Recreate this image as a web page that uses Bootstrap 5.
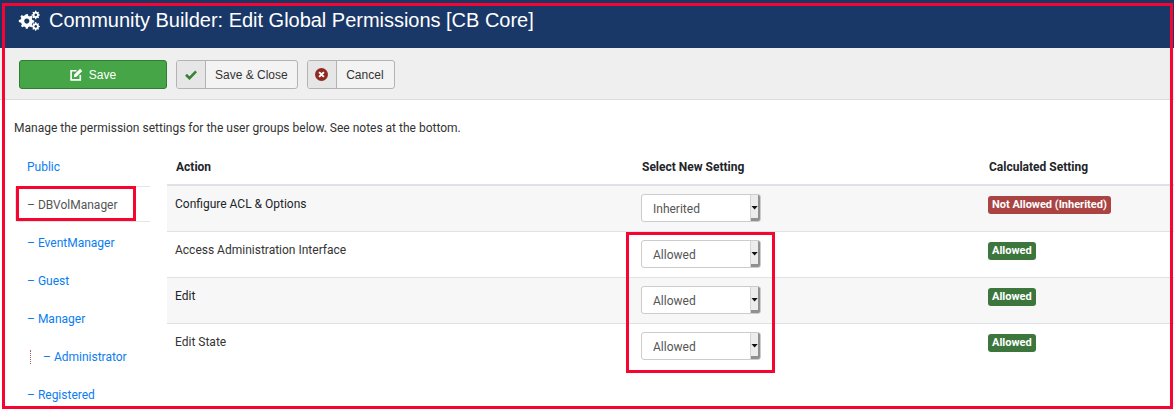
<!DOCTYPE html>
<html lang="en">
<head>
<meta charset="utf-8">
<title>Community Builder: Edit Global Permissions</title>
<link href="https://cdn.jsdelivr.net/npm/bootstrap@5.3.0/dist/css/bootstrap.min.css" rel="stylesheet">
<style>
html,body{height:418px;overflow:hidden}
body{font-family:Roboto,sans-serif;font-size:12px;line-height:18px;color:#333;background:#fff;position:relative}
.page-head{height:48px;background:#1a3867;color:#fff;padding:0 18px 8px;gap:8px;font-family:"Liberation Sans",sans-serif;font-size:20px;line-height:24px}
.page-head h1{font:inherit;margin:0;letter-spacing:-.02px}
.tool-bar{height:52px;background:#efefef;border-bottom:1px solid #dcdcdc;padding:12px 19px 0;gap:9px;align-items:flex-start}
.tool-btn{height:29px;border:1px solid #b3b3b3;border-radius:3px;background:#f3f3f3;color:#333;font-family:"Liberation Sans",sans-serif;font-size:12px;line-height:25px;padding:0;overflow:hidden}
.tool-btn:hover{background:#f3f3f3;color:#333;border-color:#b3b3b3}
.btn-icon{width:29px;height:27px;background:#e6e6e6;border-right:1px solid #b3b3b3}
.btn-text{padding:2px 9px 0}
.btn-text-wide{padding:2px 10px 0 9.500px}
.save-label{padding-top:2px}
.save-btn{width:148px;background:#46a546;border-color:#2f7d32;color:#fff;gap:6px}
.save-btn:hover{background:#46a546;border-color:#2f7d32;color:#fff}
.intro{padding:19px 14px 0;margin:0;height:52px;color:#333}
.perm-wrap{padding-left:15px;gap:17px}
.group-list{width:135px;flex:none;margin:-4px 0 0;padding:0;list-style:none}
.group-list li{height:38px;padding:10px 12px;line-height:18px;white-space:nowrap;display:flex;align-items:flex-start}
.group-list a{color:#0a7df0;text-decoration:none}
.group-list .now{border:1px solid #e4e4e4;border-right:0;border-radius:3px 0 0 3px;height:36px;margin:0 0 2px;padding:9px 11px;color:#555}
.dash{margin-right:3px}
.tree-mark{display:inline-block;width:0;height:14px;border-left:1px dotted #a66;margin:2px 12px 0 3px}
.perm-table{flex:1 1 auto;align-self:flex-start;margin:0;--bs-table-striped-bg:#f7f7f7;--bs-table-bg:transparent;font-size:12px;color:#333;border-collapse:collapse;table-layout:fixed}
.perm-table>thead>tr>th{height:33px;padding:0 9px 3px;border-bottom:2px solid #dee2e6;vertical-align:middle;font-weight:700;color:#212529}
.perm-table>tbody>tr>td{height:46px;padding:9px 8px 0;vertical-align:top;border-top:1px solid #dee2e6;border-bottom:0;line-height:18px}
.perm-table>tbody>tr:first-child>td{border-top:0}
.perm-table .col-action{width:466px}
.perm-table .col-select{width:347px}
.setting-select{display:block;width:120px;height:28px;margin-top:-1px;padding:1px 11px 0;font-size:12px;line-height:26px;border:1px solid #ccc;border-radius:3px;color:#555;font-family:Roboto,sans-serif;background-color:#fff;appearance:none;-webkit-appearance:none;
background-image:url("data:image/svg+xml,%3Csvg xmlns='http://www.w3.org/2000/svg' width='10' height='26'%3E%3Crect width='10' height='26' fill='%23ececec'/%3E%3Crect x='8' width='2' height='26' fill='%23909090'/%3E%3Crect y='23' width='10' height='3' fill='%23909090'/%3E%3Crect width='1' height='26' fill='%23d4d4d4'/%3E%3Cpath d='M1.500 11h6.200L4.600 14.600z' fill='%23111'/%3E%3C/svg%3E");background-repeat:no-repeat;background-position:right top;background-size:10px 26px}
.state-badge{display:inline-block;padding:0 4px;height:18px;line-height:18px;border-radius:3px;font-size:11px;font-weight:700;color:#fff;vertical-align:top;margin-top:1px}
.state-no{background:#a94442}
.state-yes{background:#3c763d}
.mark-frame{position:absolute;border:3px solid #f5052f;pointer-events:none}
.mark-page{left:2px;top:3px;width:1171px;height:406px}
.mark-group{left:16px;top:186px;width:120px;height:35px}
.mark-select{left:626px;top:232px;width:149px;height:141px}
</style>
</head>
<body>
<header class="page-head d-flex align-items-center">
<svg width="23" height="22" viewBox="0 0 22 20" fill="#fff" aria-hidden="true"><path fill-rule="evenodd" d="M7.500 4.500l1.800-.300.500 1.700 1.500.700 1.500-.900 1.300 1.300-.900 1.500.600 1.500 1.700.400v1.900l-1.700.400-.600 1.500.900 1.500-1.300 1.300-1.500-.900-1.500.600-.500 1.700H7.500l-.400-1.700-1.500-.600-1.500.900-1.300-1.300.900-1.500-.700-1.500L.800 12V10l1.700-.400.700-1.500-.900-1.500 1.300-1.300 1.500.900 1.500-.700zM8.400 8.500a2.500 2.500 0 1 0 .010 0z"/><path fill-rule="evenodd" d="M16.500 1l1 .100.200 1 .800.400.900-.500.700.700-.500.900.300.800 1 .300v1l-1 .300-.300.800.500.900-.700.700-.900-.500-.800.300-.300 1h-1l-.200-1-.800-.300-.900.500-.700-.700.500-.900-.300-.800-1-.300v-1l1-.300.300-.800-.500-.900.700-.700.900.500.800-.400zM17 3.800a1.300 1.300 0 1 0 .010 0z"/><path fill-rule="evenodd" d="M16.500 12l1 .100.200 1 .800.400.900-.500.700.700-.500.900.300.800 1 .300v1l-1 .300-.300.800.500.900-.700.700-.900-.500-.800.300-.300 1h-1l-.200-1-.800-.300-.900.500-.700-.700.500-.900-.300-.800-1-.300v-1l1-.300.300-.800-.500-.900.700-.700.900.500.800-.400zM17 14.800a1.300 1.300 0 1 0 .010 0z"/></svg>
<h1>Community Builder: Edit Global Permissions [CB Core]</h1>
</header>
<div class="tool-bar d-flex">
<button type="button" class="btn tool-btn save-btn d-flex align-items-center justify-content-center">
<svg width="13" height="13" viewBox="0 0 12 12" aria-hidden="true"><path d="M9.500 6.500V11H1V2.500H6" fill="none" stroke="#fff" stroke-width="1.500"/><path d="M4 6l5.300-5.300 2 2L6 8l-2.500.500z" fill="#fff"/></svg>
<span class="save-label">Save</span>
</button>
<button type="button" class="btn tool-btn d-flex align-items-center">
<span class="btn-icon d-flex align-items-center justify-content-center"><svg width="12" height="10" viewBox="0 0 12 10" aria-hidden="true"><path d="M1 4.800l3.500 3.400 6.600-6.800" fill="none" stroke="#378137" stroke-width="2.600"/></svg></span>
<span class="btn-text">Save &amp; Close</span>
</button>
<button type="button" class="btn tool-btn d-flex align-items-center">
<span class="btn-icon d-flex align-items-center justify-content-center"><svg width="13" height="13" viewBox="0 0 12 12" aria-hidden="true"><circle cx="6" cy="6" r="6" fill="#8f2a23"/><path d="M3.800 3.800l4.400 4.400M8.200 3.800L3.800 8.200" stroke="#fff" stroke-width="1.800"/></svg></span>
<span class="btn-text-wide">Cancel</span>
</button>
</div>
<p class="intro">Manage the permission settings for the user groups below. See notes at the bottom.</p>
<div class="perm-wrap d-flex">
<ul class="group-list">
<li><a href="#">Public</a></li>
<li class="now"><span class="dash">–</span>DBVolManager</li>
<li><a href="#"><span class="dash">–</span>EventManager</a></li>
<li><a href="#"><span class="dash">–</span>Guest</a></li>
<li><a href="#"><span class="dash">–</span>Manager</a></li>
<li><span class="tree-mark"></span><a href="#"><span class="dash">–</span>Administrator</a></li>
<li><a href="#"><span class="dash">–</span>Registered</a></li>
</ul>
<table class="table table-striped perm-table">
<thead><tr><th class="col-action">Action</th><th class="col-select">Select New Setting</th><th>Calculated Setting</th></tr></thead>
<tbody>
<tr><td>Configure ACL &amp; Options</td><td><select class="setting-select" aria-label="Configure ACL and Options"><option>Inherited</option><option>Allowed</option><option>Denied</option></select></td><td><span class="state-badge state-no">Not Allowed (Inherited)</span></td></tr>
<tr><td>Access Administration Interface</td><td><select class="setting-select" aria-label="Access Administration Interface"><option>Allowed</option><option>Inherited</option><option>Denied</option></select></td><td><span class="state-badge state-yes">Allowed</span></td></tr>
<tr><td>Edit</td><td><select class="setting-select" aria-label="Edit"><option>Allowed</option><option>Inherited</option><option>Denied</option></select></td><td><span class="state-badge state-yes">Allowed</span></td></tr>
<tr><td>Edit State</td><td><select class="setting-select" aria-label="Edit State"><option>Allowed</option><option>Inherited</option><option>Denied</option></select></td><td><span class="state-badge state-yes">Allowed</span></td></tr>
</tbody>
</table>
</div>
<div class="mark-frame mark-page"></div>
<div class="mark-frame mark-group"></div>
<div class="mark-frame mark-select"></div>
</body>
</html>
